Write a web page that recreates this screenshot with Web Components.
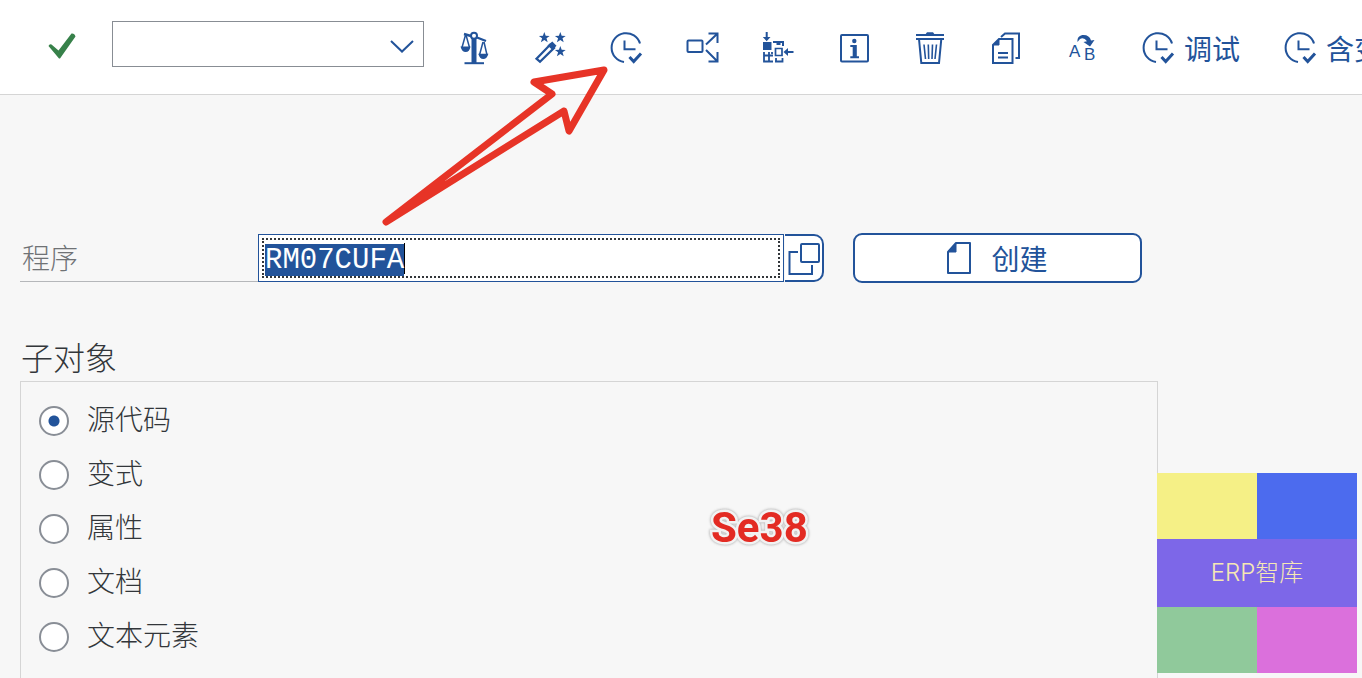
<!DOCTYPE html>
<html lang="zh-CN">
<head>
<meta charset="utf-8">
<meta name="viewport" content="width=device-width, initial-scale=1">
<title>ABAP 编辑器</title>
<style>
  html, body { margin: 0; height: 100%; }
  body {
    --blue: #22539a;
    --line: #d5d5d5;
    background: #f7f7f7;
    color: #32363a;
    font-family: "Noto Sans CJK SC", sans-serif;
    overflow: hidden;
  }
</style>
</head>
<body>
<editor-page></editor-page>

<script>
const star = (x, y) => `<path fill="currentColor" stroke="none" transform="translate(${x} ${y})" d="M0-5.6 1.4-1.7 5.4-1.6 2.2.8 3.4 4.8 0 2.4-3.4 4.8-2.2.8-5.4-1.6-1.4-1.7Z"/>`;

const ICONS = {
  scale: `<path d="M20 10V35" stroke-width="5"/><path d="M10.500 35.200H30" stroke-width="2"/>
    <path d="M10 6 17 8M23 9.500 32 13" stroke-width="2.400"/><circle cx="20" cy="7.800" r="3" stroke-width="2"/>
    <path d="M11.500 7 8 19.500M12 7 15.500 19.500M29 14 25.500 27M30 14 33 27" stroke-width="1.500"/>
    <path fill="currentColor" stroke="none" d="M6.500 18.500H16.500Q15.500 24 11.700 24T6.500 18.500ZM24.300 25.800H34.400Q33 31 29.300 31T24.300 25.800Z"/>`,
  wand: `${star(14.3, 9.5)}${star(30.3, 9.5)}${star(30.3, 23.5)}
    <path d="M6.500 30.700 20.300 16.500 24 20 10 33.800Z" stroke-width="2.300"/>
    <path d="M17.500 17.500 22.300 13.500 26.500 17.800 22.500 22Z" fill="currentColor" stroke="none"/>`,
  run: `<path d="M34 15.500A14.500 14.500 0 1 0 18 34" stroke-width="2"/><path d="M18.500 12.500V21.300H29.500" stroke-width="2"/>
    <path d="M23.500 29 27.700 33.500 35 25.500" stroke-width="3"/>`,
  expand: `<rect x="5.500" y="12.500" width="15" height="11.500" rx="1"/><path d="M24 16.500 35 6M26.500 5.500H35.500V15M24 22 35 33M26.500 33.500H35.500V24"/>`,
  layout: `<g fill="currentColor" stroke="none"><path d="M5 14H13.500V22H5ZM7.700 4H9.700V9H12.500L8.700 13.300 4.800 9H7.700ZM25.500 24 30 20V23H35.500V25H30V28Z"/></g>
    <path d="M15 14H19.500V17M21.500 17V14H25V18"/><path d="M17.500 20.500H24V27.500H17.500Z" stroke-width="1.700"/>
    <path d="M6 24V33.500H15M6 27.500H15M11 24V33.500M14 26V24M17 33.500H24.500V30M18 30V33" stroke-width="1.800"/>`,
  info: `<rect x="7" y="7" width="27" height="26.500" rx="1"/><g fill="currentColor" stroke="none"><circle cx="20.300" cy="13" r="2.200"/><path d="M16.300 17H22.800V28.300H25V30.300H16.300V28.300H18.700V19H16.300Z"/></g>`,
  trash: `<path d="M6 7H34M6 11H34" stroke-width="2"/><path fill="currentColor" stroke="none" d="M15 7 17 4.300H23L25 7Z"/>
    <path d="M9 11 11.300 35H29L31.300 11"/><path d="M14 16.500 15.500 31M18.300 16.500 18.700 31M22.500 16.500 22 31M26.500 16.500 25 31" stroke-width="1.600"/>`,
  copy: `<path d="M13 11H26.500V35H7V17Z"/><path fill="currentColor" d="M7 17 13 11V17Z" stroke-width="1"/><path d="M12 25H22M12 29.500H22M15 9 19 5.500H33V30H29.500"/>`,
  rename: `<g fill="currentColor" stroke="none" font-family="Liberation Sans, sans-serif"><text x="7" y="29" font-size="17">A</text><text x="22" y="32" font-size="17">B</text>
    <path d="M15.500 14C15 9 18 7 21.500 7Q27.500 7 29 12.500L32.500 12 28 18.500 21.500 14 25 13.300Q22 9 18 11Z"/></g>`,
};

const icon = name => `<svg width="40" height="40" viewBox="0 0 40 40" fill="none" stroke="currentColor" stroke-width="2" aria-hidden="true">${ICONS[name]}</svg>`;

const define = (name, render) => customElements.define(name, class extends HTMLElement {
  connectedCallback() {
    if (this.shadowRoot) return;
    const root = this.attachShadow({ mode: "open" });
    root.innerHTML = render(this);
    const preselected = root.querySelector("input[data-selected]");
    preselected?.focus({ preventScroll: true });
    preselected?.select();
  }
});

/* Toolbar button: icon alone, or icon with a caption in the slot */
define("tool-button", el => `
  <style>
    :host { display: block; flex: none; }
    button {
      display: flex; align-items: center; justify-content: center; gap: 6px;
      box-sizing: border-box; width: 76px; height: 54px; padding: 0; border: 0;
      background: none; color: var(--blue); font: inherit; font-size: 28px; line-height: 38px; white-space: nowrap;
    }
    :host([caption]) button { width: auto; padding: 0 22px 0 18px; }
    svg { flex: none; }
  </style>
  <button type="button" aria-label="${el.getAttribute("label") || el.textContent}">${icon(el.getAttribute("icon"))}<slot></slot></button>`);

define("tool-bar", () => `
  <style>
    :host {
      display: flex; align-items: flex-start; padding: 21px 0 19px 40px;
      background: #fff; border-bottom: 1px solid var(--line); overflow: hidden;
    }
    .ok { flex: none; width: 44px; height: 50px; padding: 0; border: 0; background: none; color: #37814a; }
    .ok svg { display: block; margin: auto; }
    .command { position: relative; flex: none; width: 312px; margin: 0 12px 0 28px; }
    select {
      display: block; appearance: none; box-sizing: border-box; width: 100%; height: 46px;
      border: 1px solid #888d94; border-radius: 0; background: #fff; font: inherit;
    }
    .command svg { position: absolute; right: 10px; top: 18px; pointer-events: none; }
  </style>
  <button class="ok" type="button" aria-label="确认">
    <svg width="30" height="28" viewBox="0 0 30 28" fill="currentColor"><path d="M1.500 14Q2.500 11.500 4.500 12.500L11.500 18.500 24.500 1.500Q27.500 1 28.500 4.500L13 26.500H12Z"/></svg>
  </button>
  <div class="command">
    <select aria-label="命令"><option></option></select>
    <svg width="24" height="14" viewBox="0 0 24 14" fill="none" stroke="var(--blue)" stroke-width="2"><path d="M1 2 12 12.500 23 2"/></svg>
  </div>
  <slot></slot>`);

define("program-row", () => `
  <style>
    :host { display: grid; grid-template-columns: 238px 1fr 40px 318px; align-items: center; padding-right: 200px; }
    label {
      box-sizing: border-box; height: 48px; padding-left: 2px; border-bottom: 1px solid #b5b7ba;
      color: #6f7275; font-size: 28px; font-weight: 300; line-height: 46px;
    }
    .field { box-sizing: border-box; height: 48px; padding: 3px; border: 1px solid var(--blue); background: #fff; }
    input {
      display: block; box-sizing: border-box; width: 100%; height: 40px; margin: 0; padding: 4px 0 0 1px;
      border: 2px dotted #32363a; border-radius: 0; outline: 0; color: #32363a; caret-color: #000;
      background: linear-gradient(#000, #000) 140px 3px / 1px 31px no-repeat #fff;
      font: 29px/32px "Liberation Mono", monospace;
    }
    input::selection { background: var(--blue); color: #fff; }
    button { box-sizing: border-box; padding: 0; border: 2px solid var(--blue); background: #fff; color: var(--blue); font: inherit; font-size: 28px; }
    .help { height: 48px; margin-left: 1px; border-left: 0; border-radius: 0 10px 10px 0; }
    .help svg { display: block; }
    .create {
      display: flex; align-items: center; justify-content: center; gap: 20px;
      height: 50px; margin-left: 29px; border-radius: 9px; line-height: 40px;
    }
  </style>
  <label for="program">程序</label>
  <div class="field"><input id="program" data-selected value="RM07CUFA" spellcheck="false"></div>
  <button class="help" type="button" aria-label="值帮助">
    <svg width="37" height="44" viewBox="0 0 37 44" fill="none" stroke="currentColor" stroke-width="2"><rect x="16" y="8" width="18" height="18" rx="1"/><path d="M13 16H4.500V38H27V29"/></svg>
  </button>
  <button class="create" type="button">
    <svg width="24" height="32" viewBox="0 0 24 32" fill="none" stroke="currentColor" stroke-width="2"><path d="M9 1H23V31H1V10Z" stroke-linejoin="round"/><path d="M1 10 9 1V10Z" fill="currentColor" stroke-width="1"/></svg>
    创建
  </button>`);

define("radio-option", el => `
  <style>
    :host { display: block; }
    label { display: flex; align-items: center; gap: 18px; height: 54px; font-size: 28px; font-weight: 300; line-height: 40px; }
    input {
      appearance: none; flex: none; box-sizing: border-box; width: 30px; height: 30px; margin: 0;
      border: 2px solid #898e96; border-radius: 50%; background: #fff;
    }
    input:checked { background: radial-gradient(circle, var(--blue) 5px, #fff 6px); }
    span { padding-bottom: 6px; }
  </style>
  <label><input type="radio" name="part" ${el.hasAttribute("checked") ? "checked" : ""}><span><slot></slot></span></label>`);

define("option-group", el => `
  <style>
    :host { display: flex; flex: 1; flex-direction: column; margin: 52px 204px 0 0; }
    h2 { margin: 0; padding: 0 0 4px 1px; font-size: 32px; font-weight: 300; line-height: 42px; }
    .panel { flex: 1; padding: 12px 18px 0; border: 1px solid var(--line); border-bottom: 0; }
  </style>
  <h2>${el.getAttribute("heading")}</h2>
  <div class="panel" role="radiogroup" aria-label="${el.getAttribute("heading")}"><slot></slot></div>`);

/* Red arrow drawn over the page, from the program field to the run button */
define("red-arrow", () => `
  <style>
    :host { position: absolute; left: 380px; top: 60px; pointer-events: none; }
    svg { display: block; }
  </style>
  <svg width="236" height="172" viewBox="380 60 236 172" fill="none" stroke="#e73427" stroke-width="7" stroke-linejoin="round" aria-hidden="true">
    <path d="M386 222 552 94 534 82 604 70 569 131 564 111Z"/>
    <path fill="#e73427" stroke="none" d="M386 222 442 178 446 182Z"/>
  </svg>`);

define("red-note", () => `
  <style>
    :host {
      position: absolute; left: 711px; top: 502px;
      color: #e32b23; font: 700 42px/52px Roboto, sans-serif;
      -webkit-text-stroke: 5px #f2f2f2; paint-order: stroke fill;
      filter: drop-shadow(0 0 1px #bbb) drop-shadow(0 0 1px #ccc);
    }
  </style>
  <slot></slot>`);

define("brand-mark", () => `
  <style>
    :host {
      position: absolute; right: 5px; bottom: 5px; display: grid; width: 200px;
      grid-template-columns: 1fr 1fr; grid-template-rows: 66px 68px 66px;
    }
    .name {
      grid-column: span 2; background: #7d67e8; color: #f6e8b4;
      font: 300 24px/68px Inter, "Noto Sans CJK SC", sans-serif; text-align: center;
    }
    .a { background: #f5f086; } .b { background: #4c6bee; }
    .c { background: #90c99b; } .d { background: #db70dc; }
  </style>
  <div class="a"></div><div class="b"></div><div class="name"><slot></slot></div><div class="c"></div><div class="d"></div>`);

define("editor-page", () => `
  <style>
    :host { position: relative; display: flex; flex-direction: column; min-height: 100%; }
    main { display: flex; flex: 1; flex-direction: column; padding: 138px 0 0 20px; }
    program-row { margin-right: 20px; }
  </style>
  <tool-bar>
    <tool-button icon="scale" label="检查"></tool-button>
    <tool-button icon="wand" label="激活"></tool-button>
    <tool-button icon="run" label="执行"></tool-button>
    <tool-button icon="expand" label="使用位置清单"></tool-button>
    <tool-button icon="layout" label="环境分析"></tool-button>
    <tool-button icon="info" label="文档"></tool-button>
    <tool-button icon="trash" label="删除"></tool-button>
    <tool-button icon="copy" label="复制"></tool-button>
    <tool-button icon="rename" label="重命名"></tool-button>
    <tool-button icon="run" caption>调试</tool-button>
    <tool-button icon="run" caption>含变</tool-button>
  </tool-bar>
  <main>
    <program-row></program-row>
    <option-group heading="子对象">
      <radio-option checked>源代码</radio-option>
      <radio-option>变式</radio-option>
      <radio-option>属性</radio-option>
      <radio-option>文档</radio-option>
      <radio-option>文本元素</radio-option>
    </option-group>
  </main>
  <red-arrow></red-arrow>
  <red-note>Se38</red-note>
  <brand-mark>ERP智库</brand-mark>`);
</script>
</body>
</html>
